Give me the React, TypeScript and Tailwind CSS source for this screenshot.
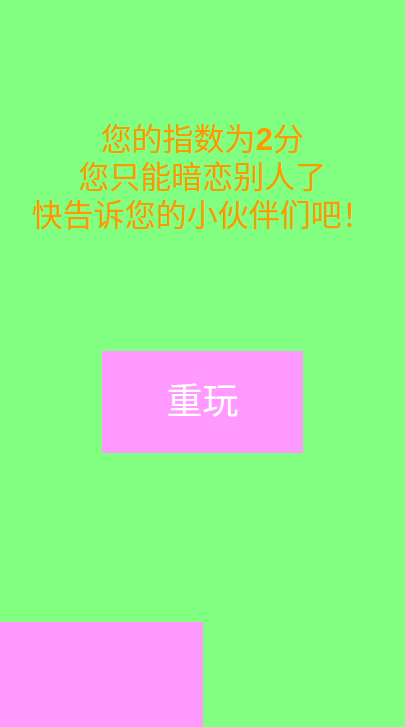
export default function App() {
  return (
    <div
      className="flex h-[727px] w-full flex-col bg-[#80ff80]"
      style={{ fontFamily: '"Noto Sans CJK SC", "Noto Sans", sans-serif' }}
    >
      {/* Result text */}
      <div className="mt-[118px] flex flex-col items-center text-[31px] leading-[38px] text-[#ff9900]">
        <p className="h-[38px]">
          您的指数为
          <span className="font-bold leading-[0]" style={{ fontFamily: '"Liberation Sans", sans-serif' }}>
            2
          </span>
          分
        </p>
        <p className="h-[38px]">您只能暗恋别人了</p>
        <p className="h-[38px]">快告诉您的小伙伴们吧！</p>
      </div>

      {/* Replay button */}
      <div className="mt-[119px] flex justify-center">
        <button className="flex h-[102px] w-[201px] items-center justify-center bg-[#ff99ff] pb-2 text-[36px] leading-none text-white">
          重玩
        </button>
      </div>

      {/* Bottom block */}
      <div className="mt-auto h-[105px] w-[203px] bg-[#ff99ff]" />
    </div>
  );
}
